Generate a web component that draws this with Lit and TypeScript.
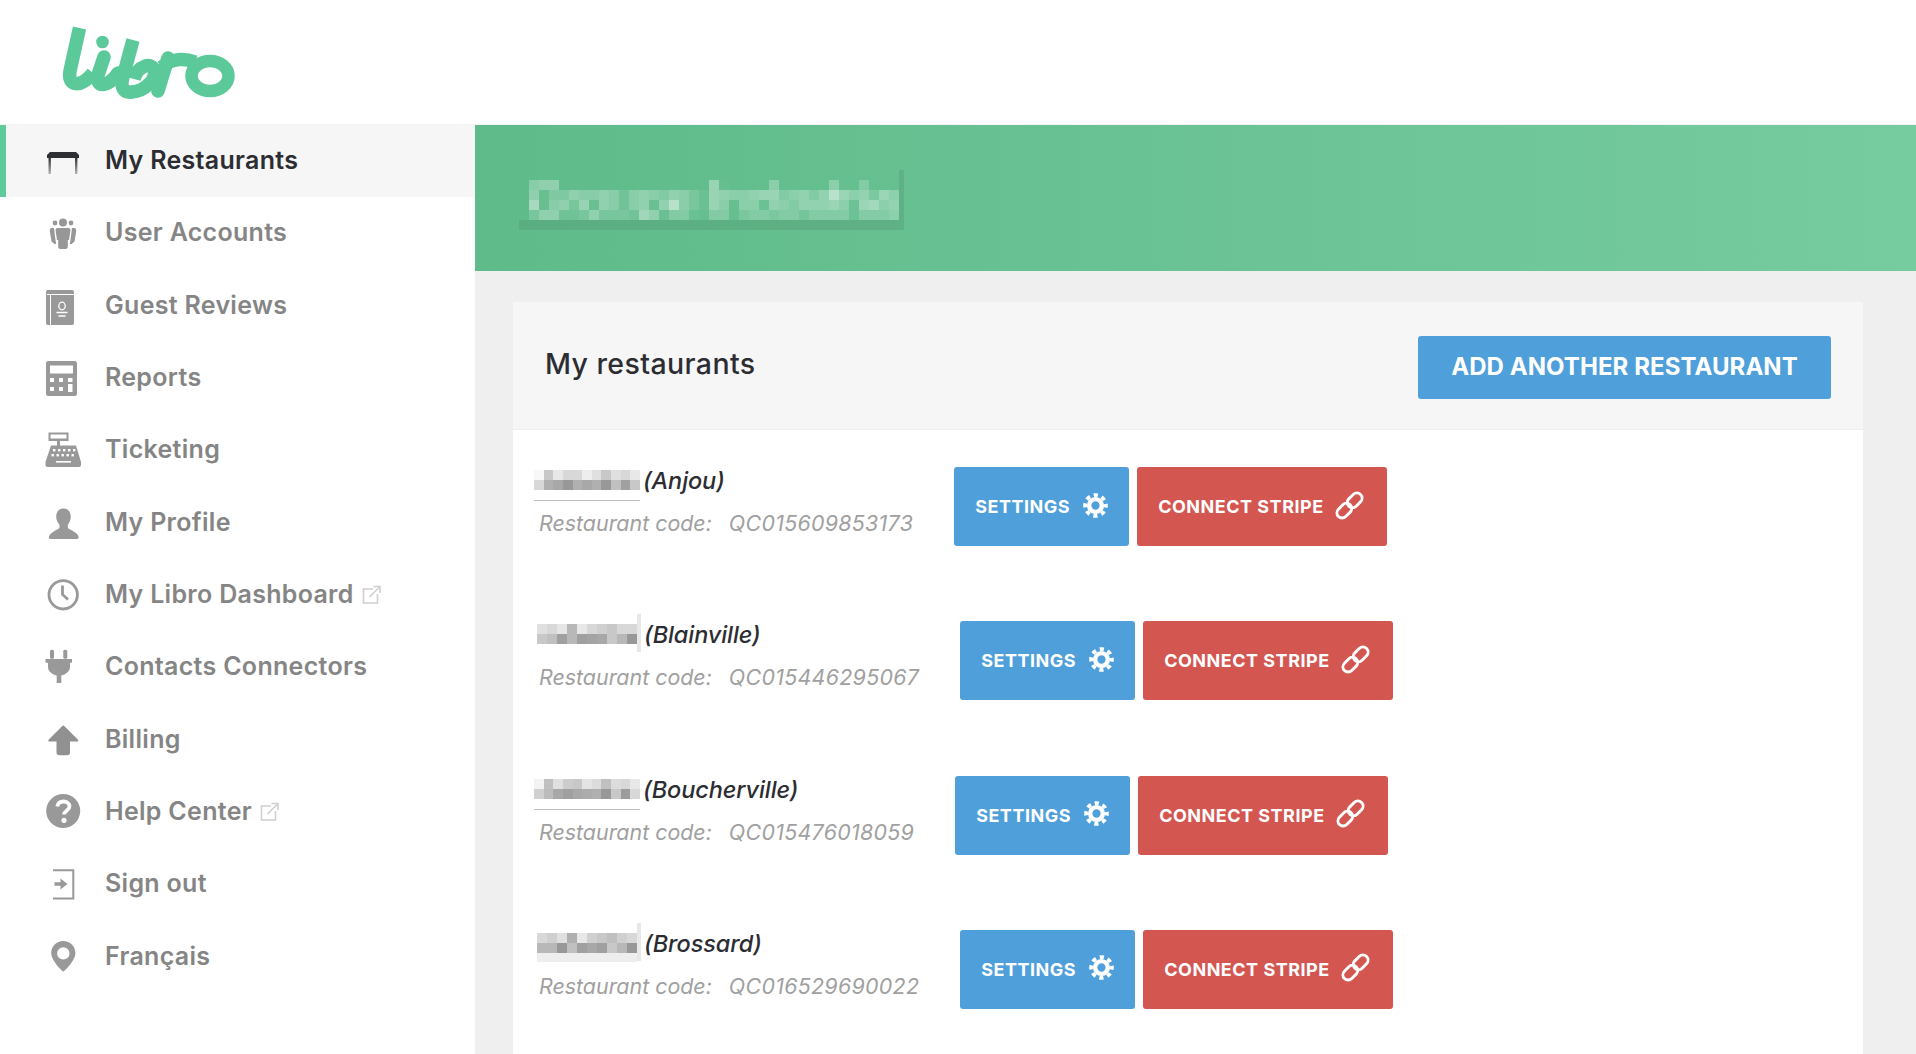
import { LitElement, html, css, svg } from "lit";
import { customElement } from "lit/decorators.js";

const ICONS: Record<string, unknown> = {
  table: svg`<defs><linearGradient id="leg" x1="0" y1="0" x2="0" y2="1"><stop offset="0" stop-color="#33343a"/><stop offset="1" stop-color="#b5b5b5"/></linearGradient></defs>
    <path d="M7 12H33L36 15V18H4V15Z" fill="#2e2f35"/><rect x="5.5" y="18" width="2.4" height="16" fill="url(#leg)"/><rect x="32" y="18" width="2.4" height="16" fill="url(#leg)"/>`,
  users: svg`<g fill="#979797"><circle cx="20" cy="10.5" r="4"/><circle cx="12" cy="11" r="2.4"/><circle cx="28" cy="11" r="2.4"/>
    <path d="M14.5 16H25.5Q27.5 16 27.5 18L26 28H24.8V35Q24.8 37 22.5 37H17.5Q15.2 37 15.2 35V28H14L12.5 18Q12.5 16 14.5 16Z"/>
    <path d="M8.5 16H11L12.5 28L13.2 32H11.5L8.5 29.5L6.8 19Q6.8 16 8.5 16Z"/><path d="M31.5 16H29L27.5 28L26.8 32H28.5L31.5 29.5L33.2 19Q33.2 16 31.5 16Z"/></g>`,
  book: svg`<rect x="3" y="5" width="28" height="35" rx="2" fill="#999"/><path d="M4 9.5H31M7.5 9.5V40" stroke="#fff" stroke-width="1" fill="none"/>
    <ellipse cx="19" cy="21" rx="3.2" ry="3.8" fill="none" stroke="#fff" stroke-width="1.3"/><path d="M13.5 27.5H24.5M15.5 31H22.5" stroke="#fff" stroke-width="1.4"/>`,
  calc: svg`<rect x="3" y="4" width="31" height="35" rx="2.5" fill="#999"/><g fill="#fff"><rect x="7" y="8.5" width="23" height="8"/>
    <rect x="7" y="21" width="4" height="4"/><rect x="16" y="21" width="4" height="4"/><rect x="25" y="21" width="4.5" height="4"/>
    <rect x="7" y="30" width="4" height="4"/><rect x="16" y="30" width="4" height="4"/><rect x="25" y="27" width="4.5" height="8"/></g>`,
  register: svg`<g fill="#999"><path d="M5.5 3.5H25.5V12H17V17H14V12H5.5ZM7.5 5.5V9.5H23.5V5.5Z" fill-rule="evenodd"/>
    <path d="M8 16.5H33L38 33V36Q38 38 36 38H4.5Q2.5 38 2.5 36V33Z"/></g>
    <g fill="#fff"><rect x="10" y="20" width="2.4" height="2.4"/><rect x="15" y="20" width="2.4" height="2.4"/><rect x="20" y="20" width="2.4" height="2.4"/><rect x="25" y="20" width="2.4" height="2.4"/><rect x="30" y="20" width="2.4" height="2.4"/>
    <rect x="8.5" y="25" width="2.4" height="2.4"/><rect x="13.5" y="25" width="2.4" height="2.4"/><rect x="18.5" y="25" width="2.4" height="2.4"/><rect x="23.5" y="25" width="2.4" height="2.4"/><rect x="28.5" y="25" width="2.4" height="2.4"/><rect x="13" y="32" width="15" height="1.6"/></g>`,
  profile: svg`<path fill="#999" d="M20.5 6.5C25 6.5 27.8 10 27.8 14.8C27.8 18.3 26 21 24.8 22.8V25.4C24.8 27.3 34 29.2 35.5 34.5C35.9 36 35.5 37 34 37H7.5C6 37 5.6 36 6 34.5C7.5 29.2 16.5 27.3 16.5 25.4V22.8C15 21 13.2 18.3 13.2 14.8C13.2 10 16 6.5 20.5 6.5Z"/>`,
  clock: svg`<circle cx="20.2" cy="20.8" r="14.2" fill="none" stroke="#999" stroke-width="2.8"/><path d="M19.5 11.5V20.5L25 25.5" fill="none" stroke="#999" stroke-width="2.8"/>`,
  plug: svg`<g fill="#999"><rect x="7" y="3.7" width="4" height="9" rx="1.5"/><rect x="20.3" y="3.7" width="4" height="9" rx="1.5"/>
    <path d="M2.5 13H29V16.5L27 17V21C27 25.5 22.5 28.5 18.3 29.5V37H13.7V29.5C9.5 28.5 5 25.5 5 21V17L2.5 16.5Z"/></g>`,
  arrow: svg`<path fill="#919191" stroke="#919191" stroke-width="2" stroke-linejoin="round" d="M20.3 7.5L34.3 21.5H26V33.5Q26 35.3 24 35.3H16.5Q14.5 35.3 14.5 33.5V21.5H6.3Z"/>`,
  help: svg`<circle cx="20.2" cy="20" r="17" fill="#999"/><path d="M14.3 15.5C15 11.5 18 10.5 20.5 10.5C24 10.5 26.5 12.7 26.5 15.5C26.5 19.5 21 19.8 21 23.5" fill="none" stroke="#fff" stroke-width="3.8"/><circle cx="21" cy="29.3" r="2.6" fill="#fff"/>`,
  signout: svg`<path d="M10 7.3H30.3V35.5H10" fill="none" stroke="#999" stroke-width="2"/><path fill="#999" d="M11.5 19.3H17.5V15.5L24.5 21L17.5 26.5V22.7H11.5Z"/>`,
  pin: svg`<path fill="#999" fill-rule="evenodd" d="M20.3 5C27 5 32.4 10.3 32.4 17C32.4 23.5 25 31.5 21.5 34.8C20.7 35.6 19.9 35.6 19.1 34.8C15.6 31.5 8.2 23.5 8.2 17C8.2 10.3 13.6 5 20.3 5ZM20.3 11.2A6.2 6.2 0 1 0 20.3 23.6A6.2 6.2 0 1 0 20.3 11.2Z"/>`,
};

const NAV = [
  ["table", "My Restaurants", 0],
  ["users", "User Accounts", 0],
  ["book", "Guest Reviews", 0],
  ["calc", "Reports", 0],
  ["register", "Ticketing", 0],
  ["profile", "My Profile", 0],
  ["clock", "My Libro Dashboard", 1],
  ["plug", "Contacts Connectors", 0],
  ["arrow", "Billing", 0],
  ["help", "Help Center", 1],
  ["signout", "Sign out", 0],
  ["pin", "Français", 0],
] as [string, string, number][];

const BANNER = [
  [.25,.3,.3,0,0,0,0,0,0,0,0,0,0,0,0,0,0,0,.35,.02,0,0,0,0,.25,0,0,0,0,0,.25,0,0,.2,0,0,0],
  [.3,.05,.2,.2,.3,.25,.25,.3,.25,.1,.25,.3,.25,.2,.3,.25,.15,.05,.35,.3,.25,.25,.3,.35,.35,.2,.25,.3,.2,.3,.55,.35,.25,.3,.15,.35,.25],
  [.45,.05,.25,.3,.15,.35,.05,.3,.25,.1,.25,.3,.05,.3,.55,.25,.15,.05,.35,.25,.02,.25,.25,.05,.3,.25,.2,.3,.3,.3,.35,.25,.05,.35,.4,.25,.3],
  [.15,.3,.3,.1,.1,.15,.3,.15,.15,.15,.1,.4,.3,.05,.2,.2,.05,.02,.2,.2,.02,.15,.2,.2,.15,.2,.2,.1,.2,.2,.2,.2,.05,.2,.2,.2,.25],
];

const ROWS = [
  { place: "(Anjou)", code: "QC015609853173", kind: "line", cells: ["f8c8e8d8d8eee0c8e0d8e8", "d8b0a898b0a8b098c0a0c8"] },
  { place: "(Blainville)", code: "QC015446295067", kind: "bar", cells: ["e0d8e6b8e8d8d0c8d8d8", "c8c0a0b8a0a4a8c8b898"] },
  { place: "(Boucherville)", code: "QC015476018059", kind: "line", cells: ["f3c0e0ccc8e4dcc0dcd8e8", "d0bca8a0a8acb098c89cd8"] },
  { place: "(Brossard)", code: "QC016529690022", kind: "barfoot", cells: ["d8d0e0b0e8d0c8c0d0d8", "b8b898c0a0a8a0c8b898"] },
];

const grey = (s: string) => (s.match(/../g) || []).map((h) => `#${h}${h}${h}`);

@customElement("app-root")
export class AppRoot extends LitElement {
  static styles = css`
    :host { display: block; width: 1916px; height: 1054px; overflow: hidden; background: #fff;
      font-family: "Inter", "Liberation Sans", sans-serif; color: #2c2d33; }
    .top { height: 125px; display: flex; box-shadow: inset 0 -1px 0 #f3f3f3; }
    .logo { width: 200px; height: 95px; margin: 15px 0 0 50px; overflow: visible; }
    .layout { display: flex; height: 929px; }
    .side { width: 475px; flex: none; }
    .item { height: 72.33px; display: flex; align-items: center; padding: 0 0 2px 43px; box-sizing: border-box;
      font-size: 25px; font-weight: 600; letter-spacing: .3px; color: #858585; }
    .item.active { background: #f6f6f6; color: #2c2d33; border-left: 6px solid #5fcb9c; padding-left: 37px; }
    .ico { width: 40px; height: 40px; margin-right: 22px; overflow: visible; flex: none; }
    .ext { width: 19px; height: 19px; margin-left: 8px; }
    .main { flex: 1; background: #efefef; }
    .banner { height: 146px; background: linear-gradient(90deg, #5fbb8a, #76cb9f); padding: 45px 0 0 44px; box-sizing: border-box; }
    .blur { width: 385px; height: 60px; box-sizing: border-box; padding: 10px 0 0 10px; display: block;
      border-right: 5px solid rgba(70,120,90,.2); border-bottom: 10px solid rgba(70,120,90,.2); }
    .bgrid { display: grid; grid-template-columns: repeat(37, 10px); grid-auto-rows: 10px; }
    .card { margin: 31px 53px 0 38px; background: #fff; height: 760px; }
    .head { height: 128px; box-sizing: border-box; background: #f6f6f6; border-bottom: 1px solid #efefef;
      display: flex; align-items: center; justify-content: space-between; padding: 0 32px 0 32px; }
    h2 { margin: 0 0 4px; font-size: 28.5px; font-weight: 500; letter-spacing: .4px; color: #2c2d33; }
    .add { width: 413px; height: 63px; background: #4f9fda; border-radius: 3px; color: #fff; font-size: 24px; font-weight: 700; letter-spacing: .07px;
      display: flex; align-items: center; justify-content: center; margin-top: 4px; padding-bottom: 2px; box-sizing: border-box; white-space: nowrap; }
    .rows { padding: 37px 0 0 21px; display: flex; flex-direction: column; gap: 75.33px; }
    .row { display: flex; align-items: flex-start; height: 79px; }
    .info { margin-right: 41px; }
    .nameline { height: 28px; display: flex; align-items: flex-start; }
    .place { font-size: 23.5px; font-style: italic; font-weight: 500; line-height: 28px; margin-left: 3px; letter-spacing: -.1px; }
    .name { width: 106px; margin-top: 3px; flex: none; }
    .name.bar { width: 104px; margin-left: 3px; margin-top: -7px; height: 38px; padding-top: 10px; box-sizing: border-box; border-right: 4px solid #e8e8e8; }
    .name.line { height: 30px; border-bottom: 1px solid #bdbdbd; }
    .ngrid { display: grid; grid-auto-flow: column; grid-auto-columns: 1fr; grid-template-rows: 10px 10px; }
    .foot { height: 9px; background: #eee; }
    .code { margin: 14px 0 0 5px; font-size: 21.4px; font-style: italic; line-height: 28px; color: #a0a0a0; white-space: nowrap; display: flex; gap: 17px; }
    .num { letter-spacing: .3px; }
    .btn { height: 79px; border-radius: 3px; color: #fff; font-size: 18px; font-weight: 700; letter-spacing: .5px; display: flex; align-items: center; box-sizing: border-box; white-space: nowrap; }
    .set { background: #4f9fda; width: 175px; padding-left: 21px; margin-right: 8px; }
    .str { background: #d35650; width: 250px; padding-left: 21px; }
    .set svg { width: 25px; height: 25px; margin-left: 13px; margin-top: -3px; flex: none; }
    .str svg { width: 29px; height: 29px; margin-left: 11px; margin-top: -3px; flex: none; }
  `;

  private ext() {
    return html`<svg class="ext" viewBox="0 0 19 19" fill="none" stroke="#d0d0d0" stroke-width="1.6">
      <path d="M11 4H1.5V18H15.5V9"/><path d="M7.5 12L17 2.5M11.5 1.5H18V8"/></svg>`;
  }

  render() {
    return html`
      <div class="top">
        <svg class="logo" viewBox="0 0 200 95" fill="none" stroke="#5cc99b" stroke-width="13.5" stroke-linecap="round" stroke-linejoin="round">
          <path stroke-linecap="butt" d="M29.5 13L20 56C17 72 31 73 43 58"/>
          <circle cx="52.5" cy="27" r="6.3" fill="#5cc99b" stroke="none"/>
          <path d="M54 42L48 60C45 73 58 73 68 58"/>
          <path stroke-linecap="butt" d="M83 25L73 62C70 73 74 78 82 77C95 76 107 64 104 55C102 47 88 50 84 64"/>
          <path d="M118 43L108 76"/>
          <path stroke-linecap="butt" d="M112 52C122 43 135 43 145 47"/>
          <ellipse cx="160" cy="61" rx="18.5" ry="15" stroke-width="12.5"/>
        </svg>
      </div>
      <div class="layout">
        <nav class="side">
          ${NAV.map(([ic, label, ext], i) => html`
            <div class="item ${i === 0 ? "active" : ""}">
              <svg class="ico" viewBox="0 0 40 40">${ICONS[ic]}</svg>
              <span>${label}</span>${ext ? this.ext() : ""}
            </div>`)}
        </nav>
        <main class="main">
          <div class="banner">
            <div class="blur"><div class="bgrid">
              ${BANNER.flat().map((a) => html`<span style="background:rgba(255,255,255,${a})"></span>`)}
            </div></div>
          </div>
          <section class="card">
            <div class="head"><h2>My restaurants</h2><div class="add">ADD ANOTHER RESTAURANT</div></div>
            <div class="rows">
              ${ROWS.map((r) => html`
                <div class="row">
                  <div class="info">
                    <div class="nameline">
                      <div class="name ${r.kind === "line" ? "line" : "bar"}">
                        <div class="ngrid">
                          ${grey(r.cells[0]).map((c, i) => html`
                            <span style="background:${c}"></span><span style="background:${grey(r.cells[1])[i]}"></span>`)}
                        </div>
                        ${r.kind === "barfoot" ? html`<div class="foot"></div>` : ""}
                      </div>
                      <span class="place">${r.place}</span>
                    </div>
                    <div class="code"><span>Restaurant code:</span><span class="num">${r.code}</span></div>
                  </div>
                  <div class="btn set">SETTINGS
                    <svg viewBox="0 0 26 26" fill="none" stroke="#fff">
                      <circle cx="13" cy="13" r="6.6" stroke-width="4.6"/>
                      <circle cx="13" cy="13" r="10.8" stroke-width="4" stroke-dasharray="4.4 4.08" stroke-dashoffset="2.2"/>
                    </svg>
                  </div>
                  <div class="btn str">CONNECT STRIPE
                    <svg viewBox="0 0 28 28" fill="none" stroke="#fff" stroke-width="2.8">
                      <rect x="1" y="14" width="16" height="10" rx="5" transform="rotate(-45 9 19)"/>
                      <rect x="11" y="4" width="16" height="10" rx="5" transform="rotate(-45 19 9)"/>
                    </svg>
                  </div>
                </div>`)}
            </div>
          </section>
        </main>
      </div>`;
  }
}
